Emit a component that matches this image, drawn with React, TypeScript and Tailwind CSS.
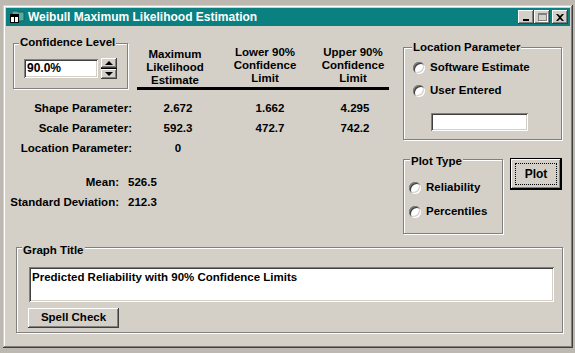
import type { ReactNode } from 'react'

const raised =
  'bg-[#d4d0c8] shadow-[inset_-1px_-1px_#404040,inset_1px_1px_#fff,inset_-2px_-2px_#808080,inset_2px_2px_#d4d0c8]'
const sunken =
  'bg-white shadow-[inset_1px_1px_#808080,inset_-1px_-1px_#fff,inset_2px_2px_#404040,inset_-2px_-2px_#d4d0c8]'

function Group({
  label,
  labelPos,
  className,
  children,
}: {
  label: string
  labelPos: string
  className: string
  children?: ReactNode
}) {
  return (
    <div
      className={`relative shrink-0 border border-[#808080] shadow-[1px_1px_0_#fff,inset_1px_1px_0_#fff] ${className}`}
    >
      <span className={`absolute ${labelPos} px-[1px] bg-[#d4d0c8] leading-[13px] font-bold whitespace-nowrap`}>
        {label}
      </span>
      {children}
    </div>
  )
}

function Radio({ label, className = '' }: { label: string; className?: string }) {
  return (
    <div className={`flex items-center h-[13px] gap-[5px] ${className}`}>
      <span className="w-3 h-3 rounded-full bg-white shadow-[inset_1px_1px_#808080,inset_-1px_-1px_#fff,inset_2px_2px_#404040,inset_-2px_-2px_#d4d0c8]" />
      <span className="font-bold leading-[13px] whitespace-nowrap">{label}</span>
    </div>
  )
}

function TitleButton({ children }: { children: ReactNode }) {
  return <div className={`w-4 h-[14px] flex items-center justify-center ${raised}`}>{children}</div>
}

const params = [
  { label: 'Shape Parameter:', v: ['2.672', '1.662', '4.295'] },
  { label: 'Scale Parameter:', v: ['592.3', '472.7', '742.2'] },
  { label: 'Location Parameter:', v: ['0', '', ''] },
]

export default function App() {
  return (
    <div className="w-[575px] h-[353px] overflow-hidden bg-[#bdb9b1] pt-[5px] pl-[3px] font-['Liberation_Sans',Arial,sans-serif] text-[11.5px] text-black">
      {/* Window */}
      <div className="w-[570px] h-[343px] p-[3px] bg-[#d4d0c8] shadow-[inset_-1px_-1px_#404040,inset_1px_1px_#d4d0c8,inset_-2px_-2px_#808080,inset_2px_2px_#fff] flex flex-col">
        {/* Title bar */}
        <div className="h-[18px] bg-[#0a8080] flex items-center pl-[3px] pr-[2px]">
          <svg width="16" height="14" viewBox="0 0 16 14" className="shrink-0">
            <path d="M3 1h5l1 1h6v9H3z" fill="#4fb0a8" stroke="#1c5c58" strokeWidth="1" />
            <rect x="1.5" y="4.5" width="8" height="8" fill="#fff" stroke="#000" />
            <rect x="2" y="5" width="7" height="2" fill="#000" />
            <line x1="5.5" y1="7" x2="5.5" y2="12" stroke="#000" />
          </svg>
          <span className="ml-[3px] text-white font-bold text-[12px] leading-[18px] whitespace-nowrap">
            Weibull Maximum Likelihood Estimation
          </span>
          <div className="ml-auto flex items-center">
            <TitleButton>
              <span className="block w-[6px] h-[2px] bg-black mt-[6px]" />
            </TitleButton>
            <TitleButton>
              <span className="block w-[9px] h-[8px] border border-[#808080] border-t-2 shadow-[1px_1px_0_#fff]" />
            </TitleButton>
            <div className="ml-[2px]">
              <TitleButton>
                <svg width="8" height="7" viewBox="0 0 8 7">
                  <path d="M0 0h2l2 2 2-2h2L5 3.5 8 7H6L4 5 2 7H0l3-3.5z" fill="#000" />
                </svg>
              </TitleButton>
            </div>
          </div>
        </div>

        {/* Body */}
        <div className="flex flex-col">
          <div className="flex">
            {/* Left column */}
            <div className="w-[390px] shrink-0">
              <div className="flex items-start">
                <Group label="Confidence Level" labelPos="top-[-8px] left-[5px]" className="ml-[7px] mt-[17px] w-[115px] h-[46px]">
                  <div className="flex items-center ml-[10px] mt-[14px]">
                    <div className={`w-[74px] h-[19px] ${sunken} pl-[3px] flex items-center`}>
                      <span className="text-[12px] font-bold leading-[13px]">90.0%</span>
                    </div>
                    <div className="ml-[3px] flex flex-col w-4 h-[21px]">
                      <div className={`h-[10px] flex items-center justify-center ${raised}`}>
                        <span className="block w-0 h-0 border-x-[4px] border-x-transparent border-b-[4px] border-b-black" />
                      </div>
                      <div className="h-[1px] bg-black" />
                      <div className={`h-[10px] flex items-center justify-center ${raised}`}>
                        <span className="block w-0 h-0 border-x-[4px] border-x-transparent border-t-[4px] border-t-black" />
                      </div>
                    </div>
                  </div>
                </Group>

                <div className="ml-[9px] mt-[20px] w-[252px]">
                  <div className="flex items-start h-[41px] font-bold leading-[13px] text-center">
                    <div className="w-[76px] pt-[2px]">
                      Maximum
                      <br />
                      Likelihood
                      <br />
                      Estimate
                    </div>
                    <div className="w-[104px]">
                      Lower 90%
                      <br />
                      Confidence
                      <br />
                      Limit
                    </div>
                    <div className="w-[72px]">
                      Upper 90%
                      <br />
                      Confidence
                      <br />
                      Limit
                    </div>
                  </div>
                  <div className="h-[3px] bg-black" />
                </div>
              </div>

              <div className="mt-[8px] font-bold">
                {params.map((p) => (
                  <div key={p.label} className="flex h-[20px] leading-[20px]">
                    <div className="w-[126px] text-right whitespace-nowrap">{p.label}</div>
                    <div className="w-[92px] text-center">{p.v[0]}</div>
                    <div className="w-[92px] text-center">{p.v[1]}</div>
                    <div className="w-[78px] text-center">{p.v[2]}</div>
                  </div>
                ))}
                <div className="mt-[14px] flex h-[20px] leading-[20px]">
                  <div className="w-[113px] text-right">Mean:</div>
                  <div className="ml-[9px]">526.5</div>
                </div>
                <div className="flex h-[20px] leading-[20px]">
                  <div className="w-[113px] text-right whitespace-nowrap">Standard Deviation:</div>
                  <div className="ml-[9px]">212.3</div>
                </div>
              </div>
            </div>

            {/* Right column */}
            <div className="ml-[7px] w-[159px] shrink-0">
              <Group label="Location Parameter" labelPos="top-[-7px] left-[8px]" className="mt-[21px] w-[159px] h-[93px]">
                <Radio label="Software Estimate" className="ml-[9px] mt-[13px]" />
                <Radio label="User Entered" className="ml-[9px] mt-[10px]" />
                <div className={`ml-[27px] mt-[16px] w-[97px] h-[18px] ${sunken}`} />
              </Group>

              <div className="mt-[18px] flex items-start">
                <Group label="Plot Type" labelPos="top-[-5px] left-[6px]" className="mt-[1px] w-[100px] h-[75px]">
                  <Radio label="Reliability" className="ml-[5px] mt-[21px]" />
                  <Radio label="Percentiles" className="ml-[5px] mt-[11px]" />
                </Group>
                <div className="ml-[7px] w-[52px] h-[32px] border border-black">
                  <div className="w-full h-full p-[4px] bg-[#d4d0c8] shadow-[inset_-1px_-1px_#000,inset_1px_1px_#fff,inset_-2px_-2px_#808080,inset_2px_2px_#d4d0c8]">
                    <div className="w-full h-full border border-dotted border-black flex items-center justify-center font-bold text-[12px]">
                      Plot
                    </div>
                  </div>
                </div>
              </div>
            </div>
          </div>

          <Group label="Graph Title" labelPos="top-[-4px] left-[5px]" className="ml-[10px] mt-[13px] w-[547px] h-[86px]">
            <div className={`ml-[12px] mt-[19px] w-[525px] h-[35px] ${sunken} pl-[3px] pt-[2px]`}>
              <span className="font-bold leading-[13px] whitespace-nowrap">
                Predicted Reliability with 90% Confidence Limits
              </span>
            </div>
            <div className={`ml-[11px] mt-[6px] w-[91px] h-[20px] ${raised} flex items-center justify-center font-bold`}>
              Spell Check
            </div>
          </Group>
        </div>
      </div>
    </div>
  )
}
